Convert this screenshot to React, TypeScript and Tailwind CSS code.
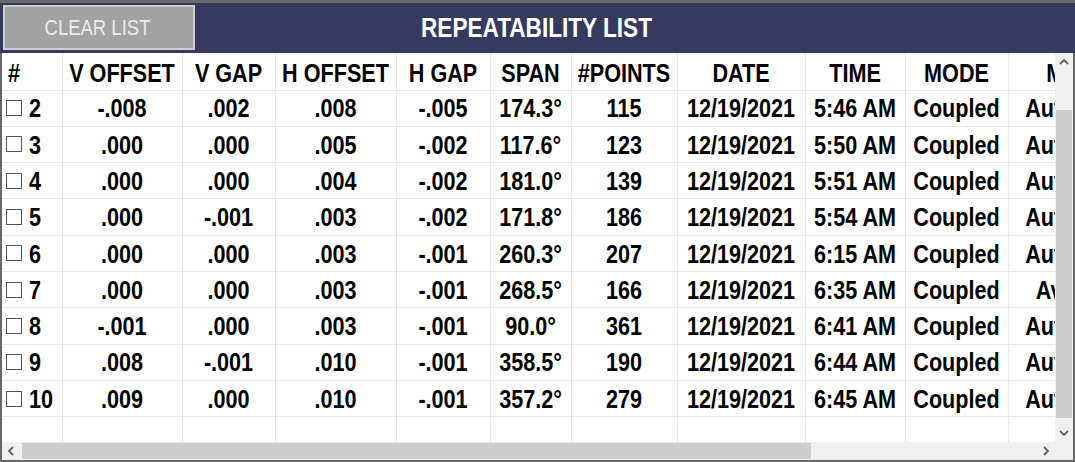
import React from "react";

const cols = [60, 120, 93, 121, 94, 81, 106, 128, 100, 103, 140];
const headers = ["#", "V OFFSET", "V GAP", "H OFFSET", "H GAP", "SPAN", "#POINTS", "DATE", "TIME", "MODE", "MOVE"];
const rows: string[][] = [
  ["2", "-.008", ".002", ".008", "-.005", "174.3°", "115", "12/19/2021", "5:46 AM", "Coupled", "Automatic"],
  ["3", ".000", ".000", ".005", "-.002", "117.6°", "123", "12/19/2021", "5:50 AM", "Coupled", "Automatic"],
  ["4", ".000", ".000", ".004", "-.002", "181.0°", "139", "12/19/2021", "5:51 AM", "Coupled", "Automatic"],
  ["5", ".000", "-.001", ".003", "-.002", "171.8°", "186", "12/19/2021", "5:54 AM", "Coupled", "Automatic"],
  ["6", ".000", ".000", ".003", "-.001", "260.3°", "207", "12/19/2021", "6:15 AM", "Coupled", "Automatic"],
  ["7", ".000", ".000", ".003", "-.001", "268.5°", "166", "12/19/2021", "6:35 AM", "Coupled", "Average"],
  ["8", "-.001", ".000", ".003", "-.001", "90.0°", "361", "12/19/2021", "6:41 AM", "Coupled", "Automatic"],
  ["9", ".008", "-.001", ".010", "-.001", "358.5°", "190", "12/19/2021", "6:44 AM", "Coupled", "Automatic"],
  ["10", ".009", ".000", ".010", "-.001", "357.2°", "279", "12/19/2021", "6:45 AM", "Coupled", "Automatic"],
];

const Chevron = ({ dir }: { dir: "up" | "down" | "left" | "right" }) => {
  const d = {
    up: "M1 6 L5 2 L9 6",
    down: "M1 2 L5 6 L9 2",
    left: "M6 1 L2 5 L6 9",
    right: "M2 1 L6 5 L2 9",
  }[dir];
  const vert = dir === "up" || dir === "down";
  return (
    <svg width={vert ? 10 : 8} height={vert ? 8 : 10} viewBox={vert ? "0 0 10 8" : "0 0 8 10"}>
      <path d={d} fill="none" stroke="#606060" strokeWidth="1.8" />
    </svg>
  );
};

const T = ({ children }: { children: React.ReactNode }) => (
  <span className="inline-block scale-y-[1.22]">{children}</span>
);

export default function App() {
  const font = { fontFamily: "'Liberation Sans', Arial, sans-serif" };
  return (
    <div className="w-[1075px] h-[462px] bg-[#686868] flex flex-col overflow-hidden" style={font}>
      <div className="h-[3px] bg-[#6a6a6a]" />
      <div className="h-[50px] bg-[#363a5e] grid grid-cols-[1fr_auto_1fr] items-start">
        <div className="pl-[3px] pt-[2px]">
          <button className="w-[192px] h-[45px] bg-[#a2a2a2] border-2 border-[#cfcfcf] text-[#ececec] text-[18.5px] leading-none flex items-center justify-center pt-[1px] pr-[3px]">
            <span className="inline-block scale-y-[1.15]">CLEAR LIST</span>
          </button>
        </div>
        <div className="text-white font-bold text-[22.6px] leading-none pt-[14px] pr-[2px]">
          <span className="inline-block scale-y-[1.25]">REPEATABILITY LIST</span>
        </div>
        <div />
      </div>
      <div className="flex-1 flex min-h-0 pl-[2px] pr-[2px]">
        <div className="flex-1 flex flex-col min-w-0 bg-white">
          <div className="flex-1 overflow-hidden min-h-0">
            <table
              className="table-fixed border-collapse text-black font-bold text-[21.6px] leading-none"
              style={{ width: cols.reduce((a, b) => a + b, 0) }}
            >
              <colgroup>
                {cols.map((w, i) => (
                  <col key={i} style={{ width: w }} />
                ))}
              </colgroup>
              <thead>
                <tr className="h-[37px]">
                  {headers.map((h, i) => (
                    <th
                      key={i}
                      className={`border-r border-b border-[#e8e8e8] font-bold whitespace-nowrap overflow-hidden pt-[3px] ${i === 0 ? "text-left pl-[6px]" : "text-center"}`}
                    >
                      <T>{h}</T>
                    </th>
                  ))}
                </tr>
              </thead>
              <tbody>
                {rows.map((r, ri) => (
                  <tr key={ri} className="h-[36.3px]">
                    {r.map((c, ci) => (
                      <td
                        key={ci}
                        className={`border-r border-b border-[#e8e8e8] whitespace-nowrap overflow-hidden ${ci === 0 ? "text-left pl-[4px]" : "text-center"}`}
                      >
                        {ci === 0 ? (
                          <span className="flex items-center gap-[7px]">
                            <span className="block shrink-0 w-[16px] h-[16px] border border-[#555] bg-white" />
                            <T>{c}</T>
                          </span>
                        ) : (
                          <T>{c}</T>
                        )}
                      </td>
                    ))}
                  </tr>
                ))}
                <tr className="h-[36px]">
                  {cols.map((_, ci) => (
                    <td key={ci} className="border-r border-[#e8e8e8]" />
                  ))}
                </tr>
              </tbody>
            </table>
          </div>
          <div className="h-[18px] bg-[#f0f0f0] flex items-stretch shrink-0">
            <div className="w-[18px] flex items-center justify-center">
              <Chevron dir="left" />
            </div>
            <div className="flex-1 flex items-stretch py-[1px]">
              <div className="w-[789px] ml-[2px] bg-[#cdcdcd]" />
            </div>
            <div className="w-[18px] flex items-center justify-center">
              <Chevron dir="right" />
            </div>
          </div>
        </div>
        <div className="w-[18px] flex flex-col bg-[#f0f0f0]">
          <div className="flex-1 flex flex-col">
            <div className="h-[18px] flex items-center justify-center">
              <Chevron dir="up" />
            </div>
            <div className="flex-1 flex flex-col px-[1px]">
              <div className="h-[39px]" />
              <div className="h-[308px] bg-[#cdcdcd]" />
            </div>
            <div className="h-[18px] flex items-center justify-center">
              <Chevron dir="down" />
            </div>
          </div>
          <div className="h-[18px] bg-[#f0f0f0]" />
        </div>
      </div>
      <div className="h-[2px] bg-[#686868]" />
    </div>
  );
}
